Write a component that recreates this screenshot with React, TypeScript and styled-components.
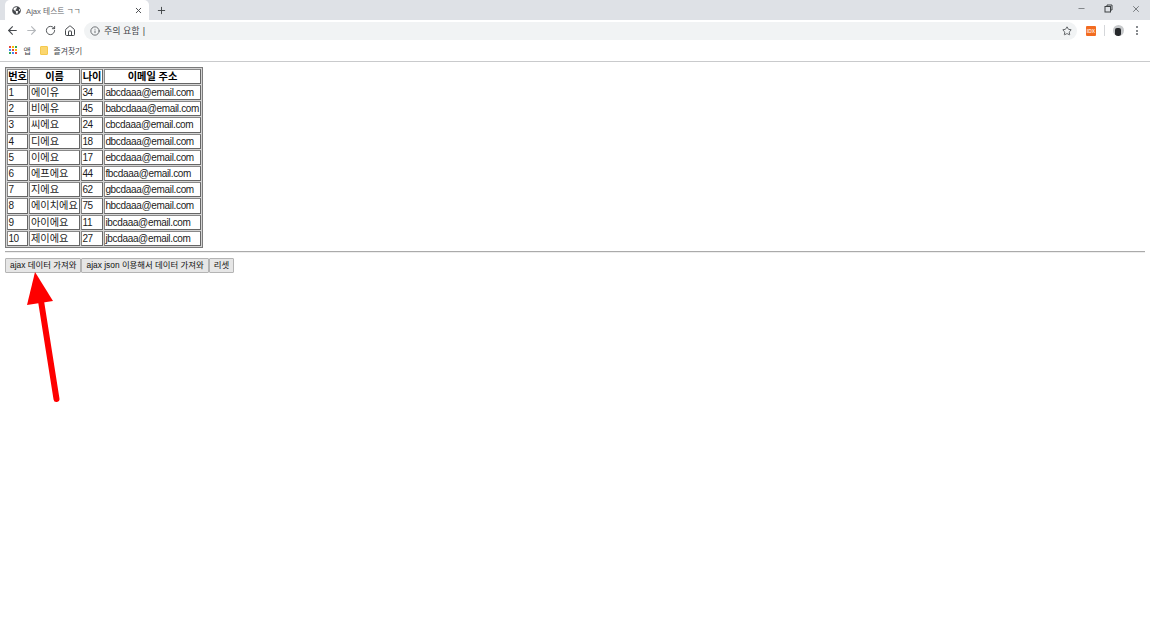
import React from 'react';
import styled, { createGlobalStyle } from 'styled-components';
import { ArrowLeft, ArrowRight, RotateCw, Home, Info, Star, X, Plus, Minus } from 'lucide-react';
import { FaGlobeAmericas } from 'react-icons/fa';

const GlobalStyle = createGlobalStyle`
  html, body {
    margin: 0;
    padding: 0;
    background: #fff;
    font-family: "Liberation Sans", "Noto Sans CJK KR", sans-serif;
  }
`;

const Page = styled.div`
  position: relative;
  width: 1150px;
  height: 629px;
  overflow: hidden;
  background: #fff;
`;

const TabStrip = styled.div`
  height: 20px;
  background: #dee1e6;
  display: flex;
  align-items: flex-end;
  padding-left: 5px;
`;

const Tab = styled.div`
  width: 144px;
  height: 20px;
  box-sizing: border-box;
  background: #fff;
  border-radius: 5px 5px 0 0;
  display: flex;
  align-items: center;
  padding: 0 6px 0 7px;
  color: #5f6368;
  font-size: 7.7px;
`;

const TabTitle = styled.span`
  flex: 1;
  margin-left: 5px;
`;

const NewTab = styled.div`
  width: 24px;
  height: 20px;
  display: flex;
  align-items: center;
  justify-content: center;
  color: #3c4043;
`;

const WindowControls = styled.div`
  margin-left: auto;
  height: 17px;
  align-self: flex-start;
  display: flex;
  align-items: center;
  color: #3c4043;
`;

const WindowButton = styled.div`
  width: 27.5px;
  height: 17px;
  display: flex;
  align-items: center;
  justify-content: center;
`;

const Toolbar = styled.div`
  height: 21px;
  display: flex;
  align-items: center;
  padding-left: 3px;
  background: #fff;
`;

const NavButton = styled.div<{ $muted?: boolean }>`
  width: 19px;
  height: 20px;
  display: flex;
  align-items: center;
  justify-content: center;
  color: ${({ $muted }) => ($muted ? '#b4b7bb' : '#45484c')};
`;

const Omnibox = styled.div`
  width: 993px;
  height: 18px;
  margin-left: 5px;
  border-radius: 9px;
  background: #f1f3f4;
  display: flex;
  align-items: center;
  padding: 0 5px 0 6px;
  box-sizing: border-box;
  color: #45484c;
  font-size: 9px;
`;

const Warning = styled.span`
  margin-left: 4px;
  flex: 1;
`;

const Caret = styled.span`
  color: #444;
  font-weight: 300;
  margin-left: 3px;
`;

const ExtensionBadge = styled.div`
  width: 10px;
  height: 10px;
  margin-left: 9px;
  border-radius: 1px;
  background: #f26b21;
  color: #ffe3d2;
  font-size: 5px;
  font-weight: bold;
  line-height: 10px;
  text-align: center;
`;

const ToolbarDivider = styled.div`
  width: 1px;
  height: 11px;
  margin-left: 8px;
  background: #d5d7da;
`;

const Avatar = styled.div`
  position: relative;
  width: 11px;
  height: 11px;
  margin-left: 8px;
  border-radius: 50%;
  background: #c7c9cb;
  overflow: hidden;
  &::after {
    content: '';
    position: absolute;
    left: 2px;
    top: 3px;
    width: 6px;
    height: 8px;
    background: #26282b;
    border-radius: 2px;
  }
`;

const MoreDots = styled.div`
  margin-left: 12px;
  width: 2px;
  display: flex;
  flex-direction: column;
  gap: 1.5px;
`;

const Dot = styled.span`
  width: 2px;
  height: 2px;
  border-radius: 50%;
  background: #5f6368;
`;

const BookmarkBar = styled.div`
  height: 21px;
  box-sizing: border-box;
  border-bottom: 1px solid #c9cacc;
  display: flex;
  align-items: center;
  padding: 0 0 2px 9px;
  font-size: 7.8px;
  color: #45484c;
`;

const AppsGrid = styled.div`
  display: grid;
  grid-template-columns: repeat(3, 2px);
  grid-auto-rows: 2px;
  gap: 1.2px;
`;

const AppDot = styled.span<{ $color: string }>`
  background: ${({ $color }) => $color};
`;

const BookmarkLabel = styled.span`
  margin-left: 6px;
`;

const Folder = styled.div`
  width: 8px;
  height: 9px;
  margin-left: 9px;
  background: #fbd66f;
  border-radius: 1px;
  box-sizing: border-box;
  border: 1px solid #f4c94e;
`;

const Content = styled.div`
  padding: 5px 5px 0;
  color: #000;
`;

const DataTable = styled.table`
  border-collapse: separate;
  border-spacing: 1px;
  border: 1px solid #7b7b7b;
  background: #d4d4d4;
  table-layout: fixed;
  width: 198px;
  font-size: 10px;
`;

const HeadCell = styled.th`
  border: 1px solid #888;
  border-right-color: #666;
  border-bottom-color: #666;
  background: #fff;
  padding: 0;
  height: 13px;
  line-height: 13px;
  font-size: 10.2px;
  font-weight: bold;
  text-align: center;
  white-space: nowrap;
  overflow: hidden;
`;

const BodyCell = styled.td<{ $hangul?: boolean }>`
  border: 1px solid #888;
  border-right-color: #666;
  border-bottom-color: #666;
  background: #fff;
  padding: 0 0 0 ${({ $hangul }) => ($hangul ? '1px' : '0.4px')};
  height: 13.2px;
  line-height: 13px;
  font-size: ${({ $hangul }) => ($hangul ? '10.2px' : '10px')};
  letter-spacing: ${({ $hangul }) => ($hangul ? '0' : '-0.33px')};
  white-space: nowrap;
  overflow: visible;
  color: #1b1b1b;
`;

const Rule = styled.hr`
  margin: 3px 0 5px;
  height: 0;
  border: none;
  border-top: 1px solid #aaa;
  border-bottom: 1px solid #eee;
`;

const ButtonRow = styled.div`
  display: flex;
`;

const ActionButton = styled.button`
  height: 15px;
  padding: 0 4.1px;
  box-sizing: border-box;
  background: #e6e6e6;
  border: 1px solid #b4b4b4;
  border-radius: 1px;
  color: #111;
  font-family: inherit;
  font-size: 8.4px;
  line-height: 12px;
  white-space: nowrap;
`;

const Arrow = styled.svg`
  position: absolute;
  left: 20px;
  top: 265px;
`;

const APP_COLORS = ['#ea4335', '#fbbc04', '#34a853', '#4285f4', '#ea4335', '#fbbc04', '#34a853', '#4285f4', '#ea4335'];

const PEOPLE = [
  ['1', '에이유', '34', 'abcdaaa@email.com'],
  ['2', '비에유', '45', 'babcdaaa@email.com'],
  ['3', '씨에요', '24', 'cbcdaaa@email.com'],
  ['4', '디에요', '18', 'dbcdaaa@email.com'],
  ['5', '이에요', '17', 'ebcdaaa@email.com'],
  ['6', '에프에요', '44', 'fbcdaaa@email.com'],
  ['7', '지에요', '62', 'gbcdaaa@email.com'],
  ['8', '에이치에요', '75', 'hbcdaaa@email.com'],
  ['9', '아이에요', '11', 'ibcdaaa@email.com'],
  ['10', '제이에요', '27', 'jbcdaaa@email.com'],
];

const App: React.FC = () => {
  return (
    <Page>
      <GlobalStyle />
      <TabStrip>
        <Tab>
          <FaGlobeAmericas size={9} color="#45484c" />
          <TabTitle>Ajax 테스트 ㄱㄱ</TabTitle>
          <X size={9} strokeWidth={2.5} color="#45484c" />
        </Tab>
        <NewTab>
          <Plus size={11} strokeWidth={2} />
        </NewTab>
        <WindowControls>
          <WindowButton><Minus size={9} strokeWidth={1.5} /></WindowButton>
          <WindowButton>
            <svg width="9" height="9" viewBox="0 0 9 9" fill="none" stroke="currentColor" strokeWidth="1">
              <rect x="1" y="2.5" width="5.5" height="5.5" fill="#dee1e6" />
              <path d="M3 2.5V1H8V6H6.5" />
            </svg>
          </WindowButton>
          <WindowButton><X size={10} strokeWidth={1.5} /></WindowButton>
        </WindowControls>
      </TabStrip>
      <Toolbar>
        <NavButton><ArrowLeft size={13} strokeWidth={2} /></NavButton>
        <NavButton $muted><ArrowRight size={13} strokeWidth={2} /></NavButton>
        <NavButton><RotateCw size={11} strokeWidth={2} /></NavButton>
        <NavButton><Home size={12} strokeWidth={2} /></NavButton>
        <Omnibox>
          <Info size={10} strokeWidth={1.8} />
          <Warning>주의 요함<Caret>|</Caret></Warning>
          <Star size={10} strokeWidth={2} />
        </Omnibox>
        <ExtensionBadge>IDX</ExtensionBadge>
        <ToolbarDivider />
        <Avatar />
        <MoreDots><Dot /><Dot /><Dot /></MoreDots>
      </Toolbar>
      <BookmarkBar>
        <AppsGrid>
          {APP_COLORS.map((color, i) => <AppDot key={i} $color={color} />)}
        </AppsGrid>
        <BookmarkLabel>앱</BookmarkLabel>
        <Folder />
        <BookmarkLabel>즐겨찾기</BookmarkLabel>
      </BookmarkBar>
      <Content>
        <DataTable>
          <colgroup>
            <col style={{ width: 21 }} />
            <col style={{ width: 51 }} />
            <col style={{ width: 22 }} />
            <col style={{ width: 97 }} />
          </colgroup>
          <thead>
            <tr>
              <HeadCell>번호</HeadCell>
              <HeadCell>이름</HeadCell>
              <HeadCell>나이</HeadCell>
              <HeadCell>이메일 주소</HeadCell>
            </tr>
          </thead>
          <tbody>
            {PEOPLE.map((row) => (
              <tr key={row[0]}>
                {row.map((value, i) => <BodyCell key={i} $hangul={i === 1}>{value}</BodyCell>)}
              </tr>
            ))}
          </tbody>
        </DataTable>
        <Rule />
        <ButtonRow>
          <ActionButton>ajax 데이터 가져와</ActionButton>
          <ActionButton>ajax json 이용해서 데이터 가져와</ActionButton>
          <ActionButton>리셋</ActionButton>
        </ButtonRow>
      </Content>
      <Arrow width="50" height="145" viewBox="0 0 50 145">
        <path d="M15 7L33 36L7 40Z" fill="#fe0000" />
        <path d="M21 36L36.5 134" stroke="#fe0000" strokeWidth="6" strokeLinecap="round" fill="none" />
      </Arrow>
    </Page>
  );
};

export default App;
